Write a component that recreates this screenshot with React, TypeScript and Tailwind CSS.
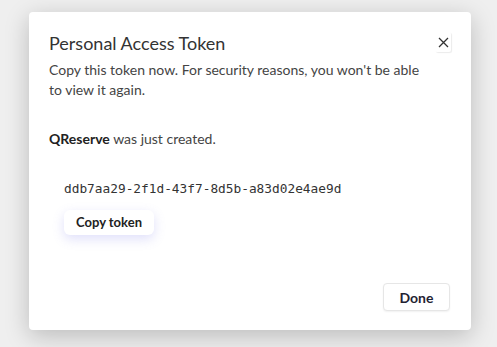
import React from 'react'

const TokenDialog = () => {
    const token = 'ddb7aa29-2f1d-43f7-8d5b-a83d02e4ae9d'

    return (
        <div className="w-[497px] h-[347px] bg-[#efefef] pt-3 pl-[29px] overflow-hidden" style={{ fontFamily: 'Lato, "Noto Sans", sans-serif' }}>
            <div className="w-[442px] h-[318px] bg-white rounded-[4px] shadow-[0_6px_24px_rgba(0,0,0,0.22)] flex flex-col px-5 pt-[19px] pb-[19px]">
                <div className="flex items-start justify-between">
                    <h2 className="text-[18px] leading-[24px] text-[#333] font-normal">Personal Access Token</h2>
                    <button className="w-[16px] h-[20px] mt-[1px] flex items-center justify-center rounded-[2px] shadow-[1px_1px_1px_rgba(0,0,0,0.08)] text-[#333]">
                        <svg width="11" height="11" viewBox="0 0 11 11" fill="none" stroke="currentColor" strokeWidth="1.3">
                            <path d="M1 1L10 10M10 1L1 10" />
                        </svg>
                    </button>
                </div>
                <p className="mt-[5px] text-[14px] leading-[20px] text-[#444] pr-4">
                    Copy this token now. For security reasons, you won't be able to view it again.
                </p>
                <p className="mt-[29px] text-[14px] leading-[20px] text-[#444]">
                    <span className="font-bold text-[#222]">QReserve</span> was just created.
                </p>
                <div className="mt-[31px] pl-[15px]">
                    <code className="block text-[12.8px] leading-[18px] text-[#333]" style={{ fontFamily: '"DejaVu Sans Mono", monospace' }}>{token}</code>
                    <button className="mt-[12px] h-[25px] w-[90px] rounded-[6px] bg-white text-[13px] font-bold text-[#222] shadow-[0_4px_12px_rgba(110,110,230,0.22)]">
                        Copy token
                    </button>
                </div>
                <div className="mt-auto flex justify-end pr-[1px]">
                    <button className="h-[28px] w-[67px] rounded-[4px] bg-white border border-[#e6e6e6] text-[14px] font-bold text-[#1f2233] shadow-[0_1px_2px_rgba(0,0,0,0.06)]">
                        Done
                    </button>
                </div>
            </div>
        </div>
    )
}

export default function App() {
    return <TokenDialog />
}
